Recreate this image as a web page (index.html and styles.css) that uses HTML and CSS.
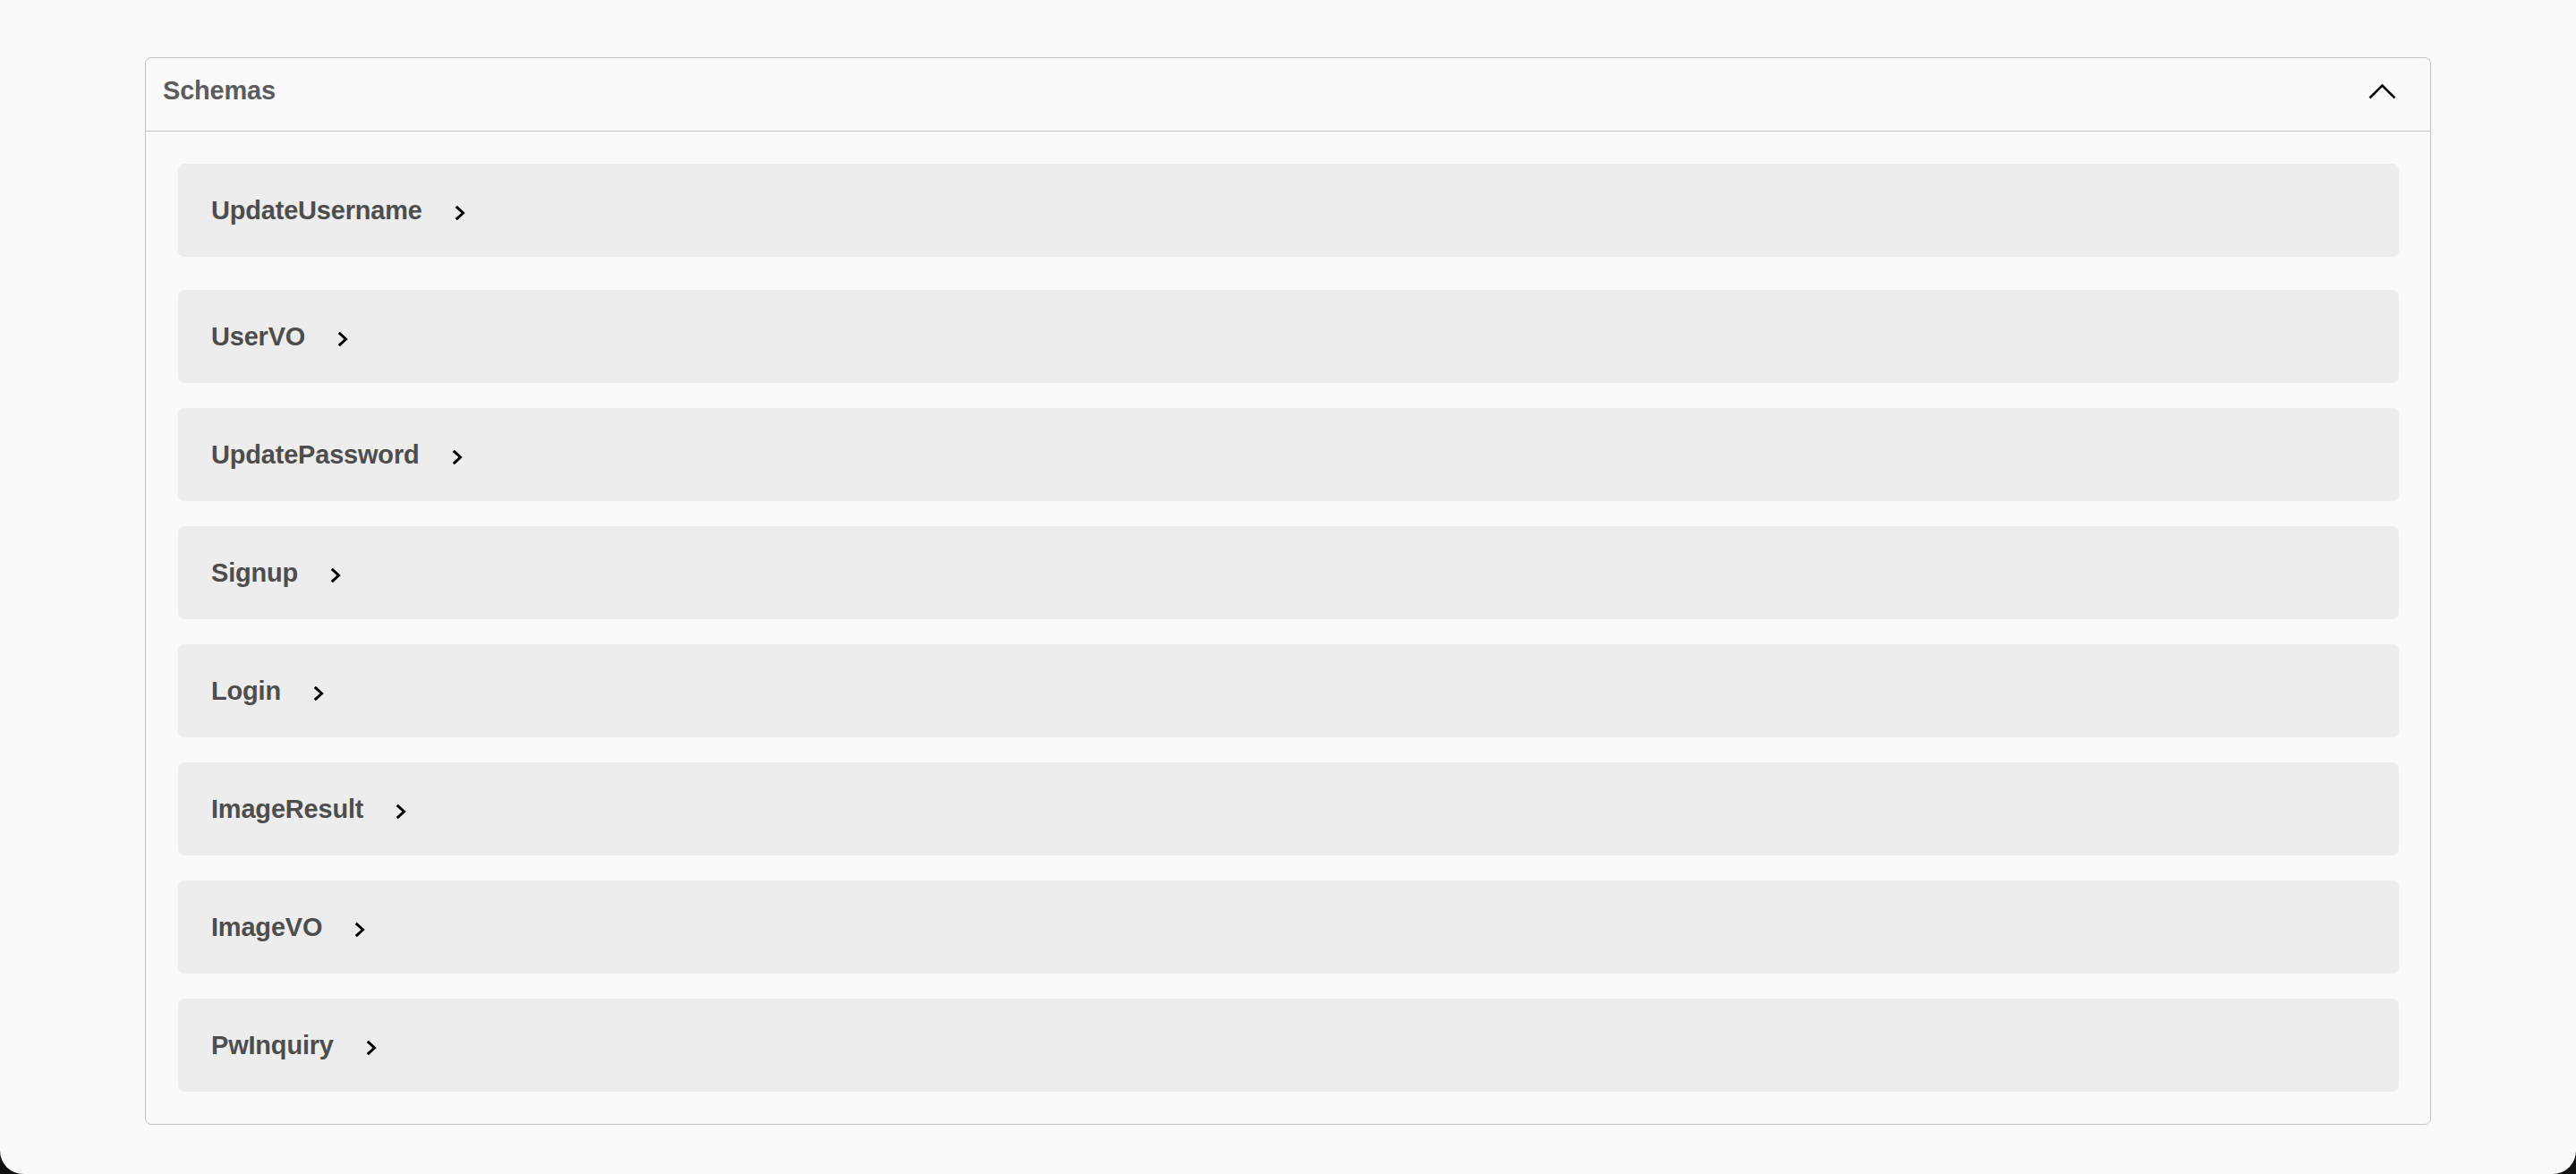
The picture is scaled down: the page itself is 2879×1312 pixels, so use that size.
FILE: index.html
```html
<!DOCTYPE html>
<html lang="en">
<head>
<meta charset="utf-8">
<title>Schemas</title>
<link rel="stylesheet" href="styles.css">
</head>
<body>
<div class="page">
  <section class="models">
    <header class="models-head">
      <h4 class="models-title">Schemas</h4>
      <svg class="head-arrow" width="31" height="18" viewBox="0 0 31 18"><polyline points="1.5,16.5 15.5,2.5 29.5,16.5" fill="none" stroke="#000" stroke-width="2.6"/></svg>
    </header>
    <div class="models-body">
      <div class="model-container first"><span class="model-title">UpdateUsername</span><svg class="arrow" width="12" height="18" viewBox="0 0 12 18"><polyline points="1.8,1.8 9.6,9 1.8,16.2" fill="none" stroke="#000" stroke-width="3"/></svg></div>
      <div class="model-container"><span class="model-title">UserVO</span><svg class="arrow" width="12" height="18" viewBox="0 0 12 18"><polyline points="1.8,1.8 9.6,9 1.8,16.2" fill="none" stroke="#000" stroke-width="3"/></svg></div>
      <div class="model-container"><span class="model-title">UpdatePassword</span><svg class="arrow" width="12" height="18" viewBox="0 0 12 18"><polyline points="1.8,1.8 9.6,9 1.8,16.2" fill="none" stroke="#000" stroke-width="3"/></svg></div>
      <div class="model-container"><span class="model-title">Signup</span><svg class="arrow" width="12" height="18" viewBox="0 0 12 18"><polyline points="1.8,1.8 9.6,9 1.8,16.2" fill="none" stroke="#000" stroke-width="3"/></svg></div>
      <div class="model-container"><span class="model-title">Login</span><svg class="arrow" width="12" height="18" viewBox="0 0 12 18"><polyline points="1.8,1.8 9.6,9 1.8,16.2" fill="none" stroke="#000" stroke-width="3"/></svg></div>
      <div class="model-container"><span class="model-title">ImageResult</span><svg class="arrow" width="12" height="18" viewBox="0 0 12 18"><polyline points="1.8,1.8 9.6,9 1.8,16.2" fill="none" stroke="#000" stroke-width="3"/></svg></div>
      <div class="model-container"><span class="model-title">ImageVO</span><svg class="arrow" width="12" height="18" viewBox="0 0 12 18"><polyline points="1.8,1.8 9.6,9 1.8,16.2" fill="none" stroke="#000" stroke-width="3"/></svg></div>
      <div class="model-container"><span class="model-title">PwInquiry</span><svg class="arrow" width="12" height="18" viewBox="0 0 12 18"><polyline points="1.8,1.8 9.6,9 1.8,16.2" fill="none" stroke="#000" stroke-width="3"/></svg></div>
    </div>
  </section>
</div>
</body>
</html>
```

FILE: styles.css
```css
html {
  height: 100%;
  background: #111;
}
body {
  margin: 0;
  height: 100%;
  background: #fafafa;
  border-radius: 0 0 26px 26px;
  font-family: "Liberation Sans", Arial, Helvetica, sans-serif;
}
.page {
  padding: 64px 162px 0 162px;
}
.models {
  border: 1px solid #c4c5c9;
  border-radius: 7px;
}
.models-head {
  display: flex;
  align-items: center;
  justify-content: space-between;
  height: 82px;
  padding: 0 38px 8px 19px;
  box-sizing: border-box;
  border-bottom: 1px solid #c4c5c9;
}
.models-title {
  margin: 0;
  font-size: 29px;
  font-weight: 700;
  color: #5c5c5c;
  letter-spacing: -0.2px;
}
.head-arrow {
  display: block;
}
.models-body {
  padding: 36px 35px 36px 36px;
  display: flex;
  flex-direction: column;
  gap: 28px;
}
.model-container {
  height: 104px;
  background: #ededed;
  border-radius: 7px;
  display: flex;
  align-items: center;
  padding-left: 37px;
}
.model-container.first {
  margin-bottom: 9px;
}
.model-title {
  font-size: 29px;
  font-weight: 700;
  color: #4d4d4d;
  letter-spacing: -0.2px;
}
.arrow {
  display: block;
  margin-left: 36px;
  margin-top: 6px;
}
```
